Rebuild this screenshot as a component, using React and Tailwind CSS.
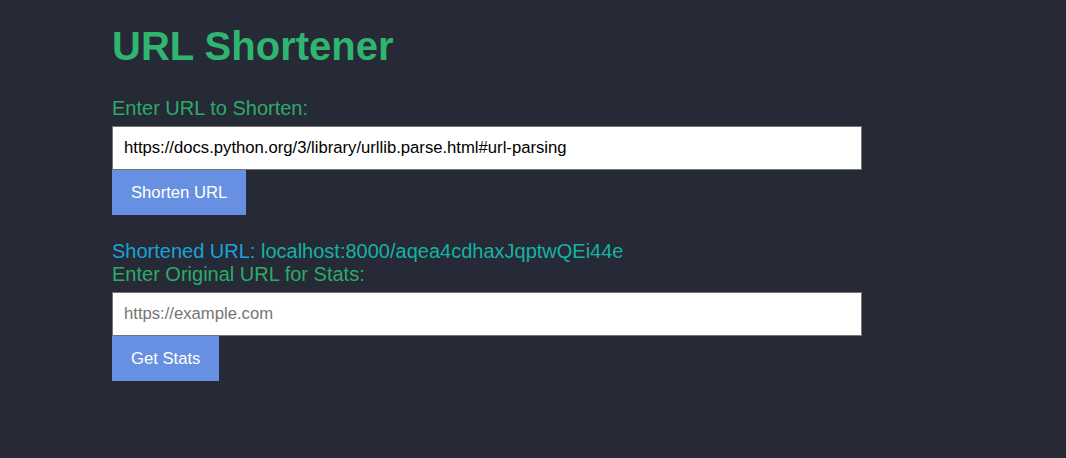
export default function App() {
  const font = { fontFamily: '"Liberation Sans", Arial, sans-serif' };
  return (
    <div className="min-h-[458px] w-full bg-[#262936] pl-[112px] pt-[23px]" style={font}>
      <h1 className="m-0 text-[40px] leading-[46px] font-bold text-[#2fb56f]">URL Shortener</h1>
      <label className="mt-[28px] block text-[20px] leading-[23px] text-[#2eaa68]">Enter URL to Shorten:</label>
      <input
        type="text"
        defaultValue="https://docs.python.org/3/library/urllib.parse.html#url-parsing"
        className="mt-[6px] block h-[44px] w-[750px] border border-[#767676] bg-white px-[11px] text-[16.67px] text-black outline-none"
      />
      <button className="block h-[45px] bg-[#6890e2] px-[19px] text-[16.67px] text-white">Shorten URL</button>
      <div className="mt-[25px] text-[20px] leading-[23px]">
        <span className="text-[#1ba3d4]">Shortened URL: </span>
        <span className="text-[#15b2a2]">localhost:8000/aqea4cdhaxJqptwQEi44e</span>
      </div>
      <label className="block text-[20px] leading-[23px] text-[#2eaa68]">Enter Original URL for Stats:</label>
      <input
        type="text"
        placeholder="https://example.com"
        className="mt-[6px] block h-[44px] w-[750px] border border-[#767676] bg-white px-[11px] text-[16.67px] text-black outline-none placeholder:text-[#757575]"
      />
      <button className="block h-[45px] bg-[#6890e2] px-[19px] text-[16.67px] text-white">Get Stats</button>
    </div>
  );
}
